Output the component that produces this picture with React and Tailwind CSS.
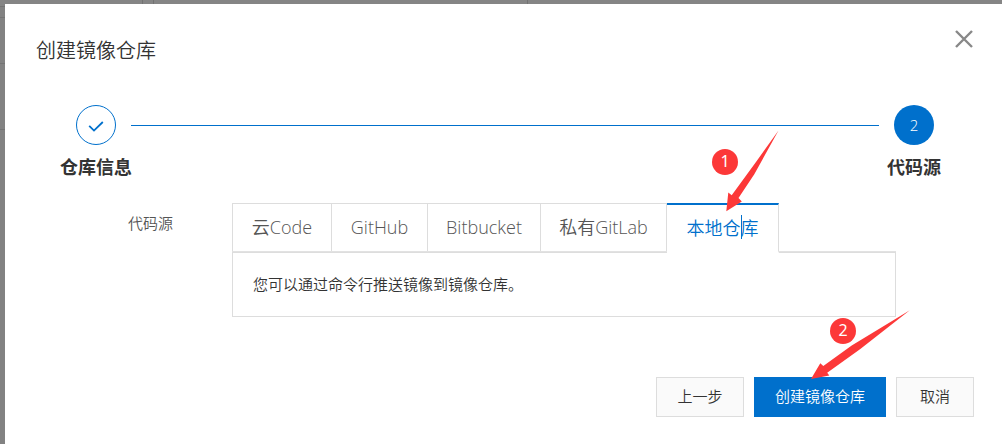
import React, { useState } from "react";

const TABS = [
  { id: "code", label: "云Code", width: "w-[98px]" },
  { id: "github", label: "GitHub", width: "w-[95px]" },
  { id: "bitbucket", label: "Bitbucket", width: "w-28" },
  { id: "gitlab", label: "私有GitLab", width: "w-[125px]" },
  { id: "local", label: "本地仓库", width: "w-[111px]" },
];

function Backdrop() {
  return (
    <div aria-hidden="true" className="absolute inset-0 flex flex-col bg-[#828282]">
      <div className="flex h-[7px] border-b border-[#747474] bg-[#858585]">
        <div className="w-[143px] border-r border-[#727272]" />
        <div className="w-[11px] border-r border-[#727272]" />
        <div className="w-[374px] border-r border-[#727272]" />
      </div>
      <div className="h-[11px] border-b border-[#747474]" />
      <div className="h-[46px] border-b border-[#747474]" />
      <div className="h-[66px] border-b border-[#747474]" />
    </div>
  );
}

function Step({ done, number, label }) {
  return (
    <li className="flex w-10 flex-col items-center">
      <span
        className={
          done
            ? "flex size-10 items-center justify-center rounded-full border border-[#0070cc] text-[#0070cc]"
            : "flex size-10 items-center justify-center rounded-full bg-[#0070cc] text-[15px] text-white"
        }
      >
        {done ? (
          <svg viewBox="0 0 16 12" className="mt-1 h-3 w-4" fill="none" stroke="currentColor" strokeWidth="1.8">
            <path d="M1.2 4.8 L6 9.6 L14.8 1" />
          </svg>
        ) : (
          number
        )}
      </span>
      <span className="mt-2 text-lg leading-7 font-bold whitespace-nowrap text-[#333]">{label}</span>
    </li>
  );
}

function Badge({ className, children }) {
  return (
    <span
      className={`absolute flex size-[26px] items-center justify-center rounded-full bg-[#fc3838] pb-0.5 font-['Noto_Sans',sans-serif] text-base leading-none font-normal text-white ${className}`}
    >
      {children}
    </span>
  );
}

export default function App() {
  const [active, setActive] = useState("local");

  return (
    <div
      lang="zh-CN"
      className="relative min-h-screen pt-1 pl-[5px] font-['Open_Sans','Noto_Sans_CJK_SC',sans-serif] text-[15px] font-[350] text-[#333]"
    >
      <Backdrop />
      <section
        role="dialog"
        aria-labelledby="dialog-title"
        className="relative flex min-h-[calc(100vh-4px)] flex-col bg-white pb-[27px]"
      >
        <header className="flex items-start justify-between pt-6 pr-[27px] pl-[31px]">
          <h1 id="dialog-title" className="pt-2 font-['Noto_Sans_CJK_SC',sans-serif] text-xl leading-7 font-[350]">
            创建镜像仓库
          </h1>
          <button type="button" aria-label="关闭" className="flex size-[22px] items-center justify-center text-[#888]">
            <svg viewBox="0 0 18 18" className="size-[18px]" fill="none" stroke="currentColor" strokeWidth="2.4">
              <path d="M1 1 L17 17 M17 1 L1 17" />
            </svg>
          </button>
        </header>

        <ol className="mt-[41px] flex gap-[15px] pr-[68px] pl-[71px]">
          <Step done label="仓库信息" />
          <li aria-hidden="true" className="mt-5 h-px flex-1 bg-[#0070cc]" />
          <Step number="2" label="代码源" />
        </ol>

        <div className="mt-[22px] flex pr-[106px] pl-[123px]">
          <span id="source-label" className="w-[104px] pt-2 leading-6 text-[#555]">
            代码源
          </span>
          <div className="flex-1">
            <div role="tablist" aria-labelledby="source-label" className="flex h-[49px] border-b border-[#e2e2e2]">
              {TABS.map((tab, i) => (
                <button
                  key={tab.id}
                  id={`tab-${tab.id}`}
                  type="button"
                  role="tab"
                  aria-selected={active === tab.id}
                  aria-controls="source-panel"
                  onClick={() => setActive(tab.id)}
                  className={`relative box-content flex h-[46px] items-center justify-center border-r border-r-[#ddd] text-lg font-[350] whitespace-nowrap ${
                    tab.width
                  } ${i === 0 ? "border-l border-l-[#ddd]" : ""} ${
                    active === tab.id
                      ? "z-10 border-t-2 border-b-2 border-t-[#0070cc] border-b-white bg-white text-[#0070cc]"
                      : "border-t border-t-[#ddd] pb-px text-[#555]"
                  }`}
                >
                  {tab.label}
                  {active === tab.id && (
                    <span aria-hidden="true" className="absolute top-[10px] left-[74px] h-6 w-px bg-[#0070cc]" />
                  )}
                </button>
              ))}
            </div>
            <div
              id="source-panel"
              role="tabpanel"
              aria-labelledby={`tab-${active}`}
              className="border border-[#ddd] px-5 py-5 leading-[23px]"
            >
              您可以通过命令行推送镜像到镜像仓库。
            </div>
          </div>
        </div>

        <footer className="mt-auto flex justify-end gap-[10px] pr-7">
          <button type="button" className="h-10 min-w-[88px] border border-[#ddd] bg-[#fafafa] px-5 pb-0.5">
            上一步
          </button>
          <button type="button" className="h-10 border border-[#0070cc] bg-[#0070cc] px-5 pb-0.5 text-white">
            创建镜像仓库
          </button>
          <button type="button" className="h-10 min-w-[78px] border border-[#ddd] bg-[#fafafa] px-5 pb-0.5">
            取消
          </button>
        </footer>
      </section>

      <div className="pointer-events-none absolute top-0 left-0 z-20">
        <Badge className="top-[149px] left-[712px]">1</Badge>
        <svg viewBox="0 0 54 82" className="absolute top-[130px] left-[725px] h-[82px] w-[54px]" fill="#fc3838">
          <path d="M53.5 0.5 L31.7 31 L6.7 65.2 L3.3 62.5 L1.3 81.2 L16.8 71.4 L13.5 68 L29.3 44.3 Z" />
        </svg>
        <Badge className="top-[318px] left-[830px]">2</Badge>
        <svg viewBox="0 0 100 70" className="absolute top-[310px] left-[810px] h-[70px] w-[100px]" fill="#fc3838">
          <path d="M99.8 0.2 L41.7 35.5 L13.3 56 L10.3 53.2 L1 69 L19.3 65.5 L17.2 62.8 L50 39.3 Z" />
        </svg>
      </div>
    </div>
  );
}
